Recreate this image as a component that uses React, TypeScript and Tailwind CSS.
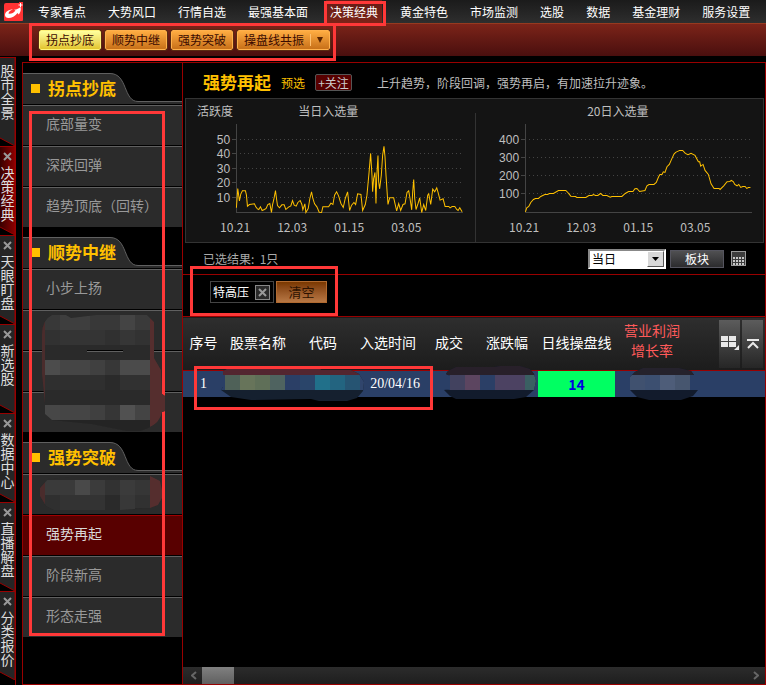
import React, { useState } from "react"

const navItems = [
  "专家看点",
  "大势风口",
  "行情自选",
  "最强基本面",
  "决策经典",
  "黄金特色",
  "市场监测",
  "选股",
  "数据",
  "基金理财",
  "服务设置",
]

const railTabs = ["股市全景", "决策经典", "天眼盯盘", "新选股", "数据中心", "直播解盘", "分类报价"]

const columns = [
  { label: "序号", width: "w-[41px]" },
  { label: "股票名称", width: "w-[68px]" },
  { label: "代码", width: "w-[62px]" },
  { label: "入选时间", width: "w-[68px]" },
  { label: "成交", width: "w-[54px]" },
  { label: "涨跌幅", width: "w-[62px]" },
  { label: "日线操盘线", width: "w-[77px]" },
]

// Series points are in thirds of a pixel
const dailyPoints =
  "154,338 158,280 163,317 167,297 172,287 181,287 184,300 187,333 193,328 208,326 212,335 217,341 221,343 226,335 231,346 238,343 243,340 248,328 254,325 259,352 262,330 266,313 271,286 274,310 277,331 283,338 290,329 297,329 302,343 310,336 317,332 322,316 327,330 333,333 338,322 345,316 350,328 353,344 359,326 362,352 369,340 374,310 379,290 383,310 388,326 395,335 402,351 409,352 413,335 430,335 437,324 443,328 448,300 454,290 460,302 467,325 474,337 480,310 487,290 493,346 499,330 506,322 511,328 517,296 527,298 532,346 540,328 545,300 551,235 556,175 560,240 562,290 565,250 569,232 572,325 574,250 578,181 580,260 583,281 588,240 592,180 596,154 599,185 602,240 606,300 608,328 613,308 625,308 634,347 640,325 646,346 653,328 659,326 665,292 670,287 674,310 679,344 682,290 685,253 688,310 692,343 698,325 703,308 706,330 709,352 715,328 721,346 727,300 730,296 736,328 742,282 748,290 754,278 758,292 764,315 773,311 779,334 790,334 794,338 800,334 808,334 814,343 818,346 823,338 830,350"

const twentyDayPoints =
  "166,350 170,338 176,334 182,322 190,313 196,310 205,310 212,304 224,298 232,298 238,295 250,295 265,286 287,286 293,292 302,303 316,304 320,307 347,307 356,301 365,301 370,298 376,301 383,301 391,295 398,301 410,301 420,306 425,304 455,304 465,295 475,289 488,289 494,281 500,280 508,289 524,286 530,272 536,268 551,268 558,262 565,245 569,238 575,238 579,230 584,232 590,215 597,208 604,192 611,177 616,172 628,166 637,166 645,175 653,179 662,175 674,181 684,200 688,200 691,213 698,208 704,226 714,238 722,266 731,280 746,280 749,283 760,272 770,260 778,259 783,256 789,260 793,268 800,272 805,268 811,277 817,274 824,274 829,280 834,277 840,277"

const Highlight = ({ className }: { className: string }) => (
  <div className={`pointer-events-none absolute z-20 border-3 border-[#ff3838] ${className}`} />
)

const Cross = ({ className }: { className: string }) => (
  <svg className={className} viewBox="0 0 9 9">
    <path d="M1 1L8 8M8 1L1 8" stroke="currentColor" strokeWidth="2" />
  </svg>
)

const Logo = () => (
  <svg className="h-5 w-5" viewBox="0 0 20 20">
    <path d="M2 1H15V0H19V18Q19 19 18 19H1Q0 19 0 18V3Q0 1 2 1Z" fill="#ff3333" />
    <path
      d="M1 13C1 10 4 7.500 9 7.500C6 8.500 4.500 10 4.500 11.500C6 12.500 10 11 11.500 8.500L10 7.800C13 7.500 15 6.500 16.500 5C17.300 7.500 16.500 10.500 14.800 12.500L13.500 11C11.500 14 7.500 16 4.500 16C2.500 16 1 15 1 13Z"
      fill="#fff"
    />
    <path d="M16.500 1v4M14.500 3h4" stroke="#fff" strokeWidth="1" />
  </svg>
)

interface MosaicProps {
  id: string
  className: string
  width: number
  height: number
  shape: string
  base: string
  // x, y, width, height, colour
  blocks: [number, number, number, number, string][]
}

const Mosaic = ({ id, className, width, height, shape, base, blocks }: MosaicProps) => (
  <svg
    className={`pointer-events-none absolute max-w-none ${className}`}
    width={width}
    height={height}
    shapeRendering="crispEdges"
  >
    <clipPath id={id}>
      <path d={shape} />
    </clipPath>
    <g clipPath={`url(#${id})`}>
      <rect width={width} height={height} fill={base} />
      {blocks.map(([x, y, w, h, fill]) => (
        <rect key={`${x}-${y}`} x={x} y={y} width={w} height={h} fill={fill} />
      ))}
    </g>
  </svg>
)

interface ChartProps {
  title: string
  corner?: string
  ticks: { label: string; y: number }[]
  points: string
  offset: number
}

const Chart = ({ title, corner, ticks, points, offset }: ChartProps) => (
  <svg className="block w-full text-xs" viewBox="0 0 288 143" fill="#bfbfbf">
    {corner && <text x="11" y="17">{corner}</text>}
    <text x="112" y="17">{title}</text>
    {ticks.map((t) => (
      <g key={t.label} shapeRendering="crispEdges">
        <text x="44" y={t.y + 5} textAnchor="end" className="font-['Liberation_Sans',sans-serif]">
          {t.label}
        </text>
        <path d={`M46 ${t.y + 0.5}H50`} stroke="#444" />
        <path d={`M54 ${t.y + 0.5}H276`} stroke="#444" strokeDasharray="1 3" />
      </g>
    ))}
    <path d="M50.500 25V113.500H277" fill="none" stroke="#444" shapeRendering="crispEdges" />
    <polyline
      points={points}
      transform={`translate(${offset} -4) scale(0.3333)`}
      fill="none"
      stroke="#ffc000"
      strokeWidth="3"
    />
    {["10.21", "12.03", "01.15", "03.05"].map((d, i) => (
      <text key={d} x={34 + i * 57} y="133">{d}</text>
    ))}
  </svg>
)

const SectionHead = ({ title }: { title: string }) => (
  <div className="relative h-8">
    <svg className="absolute inset-0 h-8 w-full" viewBox="0 0 159 32" preserveAspectRatio="none">
      <path d="M0 .5H87C105 .5 100 28.500 115 28.500H159V31H0Z" fill="#2b2b2b" />
      <path d="M0 .5H87C105 .5 100 28.500 115 28.500H159" fill="none" stroke="#606060" />
    </svg>
    <h2 className="relative flex h-[31px] items-center gap-2 pl-2 text-[17px] font-bold text-[#ffc000]">
      <span className="h-[9px] w-[9px] bg-[#ffc000]" />
      {title}
    </h2>
  </div>
)

const SideItem = ({ label, active }: { label?: string; active?: boolean }) => (
  <a
    href="#"
    className={`flex h-[41px] items-center border-t border-b border-b-black pb-[6px] pl-[23px] text-sm ${
      active ? "border-t-[#a00000] bg-[#580000] text-[#d8d8d8]" : "border-t-[#606060] bg-[#2b2b2b] text-[#999]"
    }`}
  >
    {label}
  </a>
)

const App = () => {
  const [period, setPeriod] = useState("当日")

  return (
    <div className="flex min-h-screen flex-col bg-black font-['Noto_Sans_CJK_SC',sans-serif] text-xs text-white">
      <header>
        <nav className="flex h-[23px] items-center gap-[22px] bg-linear-to-b from-[#1b1b1b] to-[#2e2e2e] pl-1 whitespace-nowrap">
          <div className="-mr-2 flex">
            <Logo />
          </div>
          {navItems.map((item) =>
            item === "决策经典" ? (
              <a key={item} href="#" className="relative flex h-[23px] items-center">
                <span className="absolute -inset-x-1 inset-y-0 bg-linear-to-b from-[#651b15] to-[#7c2419]" />
                <span className="relative">{item}</span>
                <Highlight className="top-px -right-2 -left-[6px] h-[25px]" />
              </a>
            ) : (
              <a key={item} href="#">{item}</a>
            )
          )}
        </nav>
        <div className="relative flex h-[33px] items-center gap-1 border-t border-[#963a20] bg-linear-to-b from-[#7c2419] to-[#4a0f0e] pl-[39px] text-[#3a0a00]">
          <button className="h-5 w-[62px] rounded-xs border border-[#fff27a] bg-linear-to-b from-[#ffff9c] to-[#e3c52a] outline outline-[#5a2a12]">
            拐点抄底
          </button>
          {["顺势中继", "强势突破"].map((label) => (
            <button
              key={label}
              className="h-5 w-[62px] rounded-xs border border-[#ffb04c] bg-linear-to-b from-[#ffad42] to-[#c87018] outline outline-[#5a2a12]"
            >
              {label}
            </button>
          ))}
          <button className="flex h-5 w-[93px] items-center rounded-xs border border-[#ffb04c] bg-linear-to-b from-[#ffad42] to-[#c87018] pl-[6px] outline outline-[#5a2a12]">
            操盘线共振
            <span className="ml-[6px] h-3 w-px bg-[#ffc070]" />
            <svg className="ml-[6px] h-[6px] w-[6px]" viewBox="0 0 6 6">
              <path d="M0 0H6L3 6Z" fill="#5a2400" />
            </svg>
          </button>
          <Highlight className="-top-px left-[29px] h-[38px] w-[307px]" />
        </div>
      </header>

      <div className="flex flex-1 pt-px">
        <aside className="mr-[6px] w-4 border-r border-[#990000]">
          {railTabs.map((tab, i) => (
            <a
              key={tab}
              href="#"
              className="relative flex h-[89px] w-[15px] flex-col items-center text-sm leading-[14px] text-[#ddd]"
            >
              <svg className="absolute inset-0 h-full w-full" viewBox="0 0 15 89">
                <defs>
                  <linearGradient id="railActive">
                    <stop stopColor="#380000" />
                    <stop offset="1" stopColor="#8c0000" />
                  </linearGradient>
                </defs>
                <path d="M0 .5H15V89L0 81Z" fill={tab === "决策经典" ? "url(#railActive)" : "#252525"} />
                <path d="M0 .5H15V89L0 81" fill="none" stroke="#990000" />
              </svg>
              {i > 0 && <Cross className="relative mt-[6px] -mb-[2px] h-[9px] w-[9px] text-[#999]" />}
              <span className="relative mt-[6px] w-[14px] break-all">{tab}</span>
            </a>
          ))}
        </aside>

        <main className="mt-[5px] flex min-w-0 flex-1 border border-[#990000]">
          <section className="relative w-[160px] shrink-0 border-r border-[#990000] pt-[10px]">
            <SectionHead title="拐点抄底" />
            <SideItem label="底部量变" />
            <SideItem label="深跌回弹" />
            <SideItem label="趋势顶底（回转）" />
            <div className="h-[9px]" />
            <SectionHead title="顺势中继" />
            <SideItem label="小步上扬" />
            <div className="relative">
              <SideItem />
              <SideItem />
              <SideItem />
              <Mosaic
                id="sideMaskA"
                className="top-1 left-[19px] z-30"
                width={123}
                height={118}
                shape="M10 1H24L29 4L54 1H105L112 8V44L119 56L120 80L123 82V97L120 98Q118 109 106 114L98 117H85L50 110L10 106L3 100V90L0 60V20Q0 6 10 1Z"
                base="#2a2a2a"
                blocks={[
                  [0, 0, 3, 118, "#4a2c2c"],
                  [3, 1, 15, 15, "#383838"],
                  [18, 1, 30, 15, "#3e3e3e"],
                  [48, 1, 30, 15, "#383838"],
                  [78, 1, 15, 15, "#444444"],
                  [93, 1, 15, 15, "#3a3a3a"],
                  [3, 16, 15, 15, "#313131"],
                  [18, 16, 45, 15, "#343434"],
                  [63, 16, 15, 15, "#303030"],
                  [78, 16, 15, 15, "#363636"],
                  [93, 16, 15, 15, "#323232"],
                  [45, 36, 36, 1, "#000000"],
                  [45, 37, 36, 1, "#606060"],
                  [3, 46, 15, 15, "#4c4c4c"],
                  [18, 46, 30, 15, "#454545"],
                  [48, 46, 15, 15, "#404040"],
                  [63, 46, 15, 15, "#373737"],
                  [78, 46, 30, 15, "#4b4b4b"],
                  [3, 61, 60, 15, "#2f2f2f"],
                  [78, 61, 30, 15, "#313131"],
                  [3, 91, 15, 15, "#474747"],
                  [18, 91, 30, 15, "#454545"],
                  [48, 91, 15, 15, "#404040"],
                  [63, 91, 15, 15, "#363636"],
                  [78, 91, 15, 15, "#515151"],
                  [93, 91, 15, 15, "#444444"],
                  [3, 106, 105, 12, "#242424"],
                  [108, 0, 15, 118, "#552e2e"],
                ]}
              />
            </div>
            <div className="h-[9px]" />
            <SectionHead title="强势突破" />
            <div className="relative">
              <SideItem />
              <Mosaic
                id="sideMaskB"
                className="top-[2px] left-[17px]"
                width={122}
                height={34}
                shape="M8 3L30 1L110 0L120 5L122 14V22L118 29L110 32L80 34H14L6 30L0 20V12Z"
                base="#2a2a2a"
                blocks={[
                  [0, 0, 5, 34, "#4a2c2c"],
                  [5, 4, 30, 15, "#3a3a3a"],
                  [35, 4, 15, 15, "#494949"],
                  [50, 4, 15, 15, "#3b3b3b"],
                  [65, 4, 15, 15, "#323232"],
                  [80, 4, 15, 15, "#3b3b3b"],
                  [95, 4, 15, 15, "#363636"],
                  [5, 19, 15, 15, "#2f2f2f"],
                  [20, 19, 45, 15, "#333333"],
                  [80, 19, 15, 15, "#383838"],
                  [95, 19, 15, 13, "#313131"],
                  [110, 0, 12, 34, "#552e2e"],
                ]}
              />
            </div>
            <SideItem label="强势再起" active />
            <SideItem label="阶段新高" />
            <SideItem label="形态走强" />
            <Highlight className="top-[48px] left-[6px] h-[525px] w-[136px]" />
          </section>

          <section className="flex min-w-0 flex-1 flex-col">
            <div className="flex h-[35px] items-center pt-1 pl-5 whitespace-nowrap">
              <h1 className="text-[17px] font-bold text-[#ffc000]">强势再起</h1>
              <span className="ml-[10px] text-[#ffc000]">预选</span>
              <button className="ml-[10px] h-[17px] w-[37px] rounded-xs border border-[#555] bg-[#580000] leading-[14px] text-[#ccc]">
                +关注
              </button>
              <p className="ml-[25px] text-[#bfbfbf]">上升趋势，阶段回调，强势再启，有加速拉升迹象。</p>
            </div>

            <div className="mx-[2px] mr-px grid grid-cols-2 border border-[#333] bg-[#141414]">
              <Chart
                title="当日入选量"
                corner="活跃度"
                ticks={[
                  { label: "50", y: 40 },
                  { label: "40", y: 54 },
                  { label: "30", y: 69 },
                  { label: "20", y: 83 },
                  { label: "10", y: 98 },
                ]}
                points={dailyPoints}
                offset={-1}
              />
              <div className="relative">
                <span className="absolute top-[14px] bottom-0 left-0 w-px bg-[#333]" />
                <Chart
                  title="20日入选量"
                  ticks={[
                    { label: "400", y: 40 },
                    { label: "300", y: 58 },
                    { label: "200", y: 76 },
                    { label: "100", y: 94 },
                  ]}
                  points={twentyDayPoints}
                  offset={-5}
                />
              </div>
            </div>

            <div className="flex h-[31px] items-center pr-[19px] pl-5">
              <span className="flex-1 text-[#aaa]">已选结果:&nbsp; 1只</span>
              <div className="relative flex">
                <select
                  aria-label="周期"
                  value={period}
                  onChange={(e) => setPeriod(e.target.value)}
                  className="h-5 w-[78px] appearance-none border-2 border-t-[#888] border-r-white border-b-white border-l-[#888] bg-white pl-[2px] leading-4 text-black"
                >
                  <option>当日</option>
                  <option>20日</option>
                </select>
                <span className="pointer-events-none absolute top-[2px] right-[2px] flex h-4 w-[17px] items-center justify-center border border-t-white border-r-[#555] border-b-[#555] border-l-white bg-[#d8d8d8]">
                  <svg className="h-1 w-[7px]" viewBox="0 0 7 4">
                    <path d="M0 0H7L3.500 4Z" fill="#000" />
                  </svg>
                </span>
              </div>
              <button className="ml-1 h-[18px] w-[54px] border border-[#55555f] bg-linear-to-b from-[#505052] to-[#2c2c2e] leading-4">
                板块
              </button>
              <button aria-label="计算器" className="ml-[7px]">
                <svg className="h-[15px] w-[15px]" viewBox="0 0 15 15" shapeRendering="crispEdges">
                  <rect x=".5" y=".5" width="14" height="14" fill="#3c3c3c" stroke="#999" />
                  <path
                    d="M2 6.500H14M2 9.500H14M2 12.500H14"
                    stroke="#c8c8c8"
                    strokeWidth="2"
                    strokeDasharray="2 1"
                  />
                </svg>
              </button>
            </div>

            <div className="relative flex h-[42px] items-start gap-[2px] border-t border-[#990000] pt-[6px] pl-[27px]">
              <div className="flex h-[22px] w-16 items-center gap-[6px] border border-[#444] pl-[2px] whitespace-nowrap">
                特高压
                <button
                  aria-label="移除"
                  className="flex h-[15px] w-[15px] shrink-0 items-center justify-center border border-[#888] bg-[#2a2a2a]"
                >
                  <Cross className="h-[9px] w-[9px] text-[#999]" />
                </button>
              </div>
              <button className="h-[22px] w-[51px] border border-[#b06a30] bg-linear-to-b from-[#7a3800] to-[#b87844] text-[13px] leading-5 text-[#2c1200]">
                清空
              </button>
              <Highlight className="-top-[9px] left-[7px] h-[50px] w-[148px]" />
            </div>

            <div className="relative flex-1">
              <table className="w-full table-fixed border-collapse text-sm whitespace-nowrap">
                <thead>
                  <tr className="h-[54px] border-y border-[#990000] bg-linear-to-b from-[#2e2e2e] to-[#1c1c1c]">
                    {columns.map((c) => (
                      <th key={c.label} className={`p-0 pb-[3px] text-center font-normal ${c.width}`}>
                        <span className="-mx-2">{c.label}</span>
                      </th>
                    ))}
                    <th className="w-[74px] p-0 pb-2 text-center leading-5 font-normal text-[#ff5a5a]">
                      营业利润
                      <br />
                      增长率
                    </th>
                    <th className="p-0">
                      <div className="flex justify-end gap-[2px] pr-[2px]">
                        <button
                          aria-label="布局"
                          className="flex h-12 w-[21px] items-center justify-center bg-linear-to-b from-[#5c5c5c] to-[#262626]"
                        >
                          <svg className="h-[15px] w-[19px]" viewBox="0 0 19 15" fill="#e8e8e8">
                            <path d="M1 0H8V5H1ZM9 0H16V5H9ZM1 6H8V11H1ZM9 6H16V11H9ZM19 9V14H14Z" />
                          </svg>
                        </button>
                        <button
                          aria-label="收起"
                          className="flex h-12 w-[21px] items-center justify-center bg-linear-to-b from-[#5c5c5c] to-[#262626]"
                        >
                          <svg className="h-[10px] w-3" viewBox="0 0 12 10" fill="none" stroke="#e8e8e8" strokeWidth="2">
                            <path d="M0 1H12M1 9L6 4L11 9" />
                          </svg>
                        </button>
                      </div>
                    </th>
                  </tr>
                </thead>
                <tbody>
                  <tr className="h-[26px] bg-[#2a3f66] text-center">
                    <td className="p-0 font-['Liberation_Serif',serif]">1</td>
                    <td className="relative p-0">
                      <Mosaic
                        id="rowMaskA"
                        className="-top-1 -left-[3px]"
                        width={143}
                        height={35}
                        shape="M2 4L8 1L28 0H98L100 3H130L138 7L143 15L142 24L136 31L126 34H98L90 32L30 33L10 30L0 23L2 20V8Z"
                        base="#15202f"
                        blocks={[
                          [0, 0, 143, 8, "#532630"],
                          [0, 8, 4, 15, "#2a3f66"],
                          [4, 8, 15, 15, "#4f6158"],
                          [19, 8, 15, 15, "#67745a"],
                          [34, 8, 15, 15, "#5f6f58"],
                          [49, 8, 15, 15, "#4f6360"],
                          [64, 8, 15, 15, "#2b3f66"],
                          [79, 8, 15, 15, "#2a456a"],
                          [94, 8, 15, 15, "#21708a"],
                          [109, 8, 15, 15, "#236480"],
                          [124, 8, 15, 15, "#265472"],
                          [139, 8, 4, 15, "#30456c"],
                        ]}
                      />
                    </td>
                    <td />
                    <td className="relative p-0 pr-[2px] text-right font-['Liberation_Serif',serif]">20/04/16</td>
                    <td className="relative p-0">
                      <Mosaic
                        id="rowMaskB"
                        className="-top-[5px] left-[22px]"
                        width={93}
                        height={34}
                        shape="M4 5L12 1H50L56 0H76L86 3L90 8L92 15L90 24L82 31L70 33H12L6 30L0 24L6 23V10L2 8Z"
                        base="#121b2c"
                        blocks={[
                          [0, 0, 93, 9, "#28202a"],
                          [0, 9, 6, 15, "#2a3f66"],
                          [6, 9, 15, 15, "#42425f"],
                          [21, 9, 15, 15, "#5c4560"],
                          [36, 9, 15, 15, "#2b3f66"],
                          [51, 9, 30, 15, "#4c4262"],
                          [81, 9, 12, 15, "#3a5f62"],
                        ]}
                      />
                    </td>
                    <td />
                    <td className="bg-[#00ff62] p-0 font-bold text-[#0000e0]">14</td>
                    <td className="relative p-0">
                      <Mosaic
                        id="rowMaskC"
                        className="-top-[3px] left-[14px]"
                        width={69}
                        height={33}
                        shape="M6 4L14 0H50L62 3L65 7H61V22H69L64 28L52 32H20L8 29L1 22V9Z"
                        base="#121b2c"
                        blocks={[
                          [0, 0, 69, 7, "#25222c"],
                          [1, 7, 15, 15, "#40516f"],
                          [16, 7, 15, 15, "#3c4f70"],
                          [31, 7, 15, 15, "#4e5d79"],
                          [46, 7, 15, 15, "#47566f"],
                        ]}
                      />
                    </td>
                    <td />
                  </tr>
                </tbody>
              </table>
              <Highlight className="top-[50px] left-[11px] h-[44px] w-[239px]" />
            </div>

            <div className="flex h-[17px] items-center bg-linear-to-b from-[#2c2c2c] to-[#1e1e1e] text-[#666]">
              <button aria-label="向左" className="flex w-[19px] justify-center pl-[3px]">
                <svg className="h-[9px] w-[6px]" viewBox="0 0 6 9" fill="none" stroke="currentColor" strokeWidth="2">
                  <path d="M5 1L1 4.500L5 8" />
                </svg>
              </button>
              <div className="h-full w-8 bg-linear-to-b from-[#808080] to-[#606060]" />
              <button aria-label="向右" className="mr-[6px] ml-auto">
                <svg className="h-[9px] w-[6px]" viewBox="0 0 6 9" fill="none" stroke="currentColor" strokeWidth="2">
                  <path d="M1 1L5 4.500L1 8" />
                </svg>
              </button>
            </div>
          </section>
        </main>
      </div>
    </div>
  )
}

export default App
